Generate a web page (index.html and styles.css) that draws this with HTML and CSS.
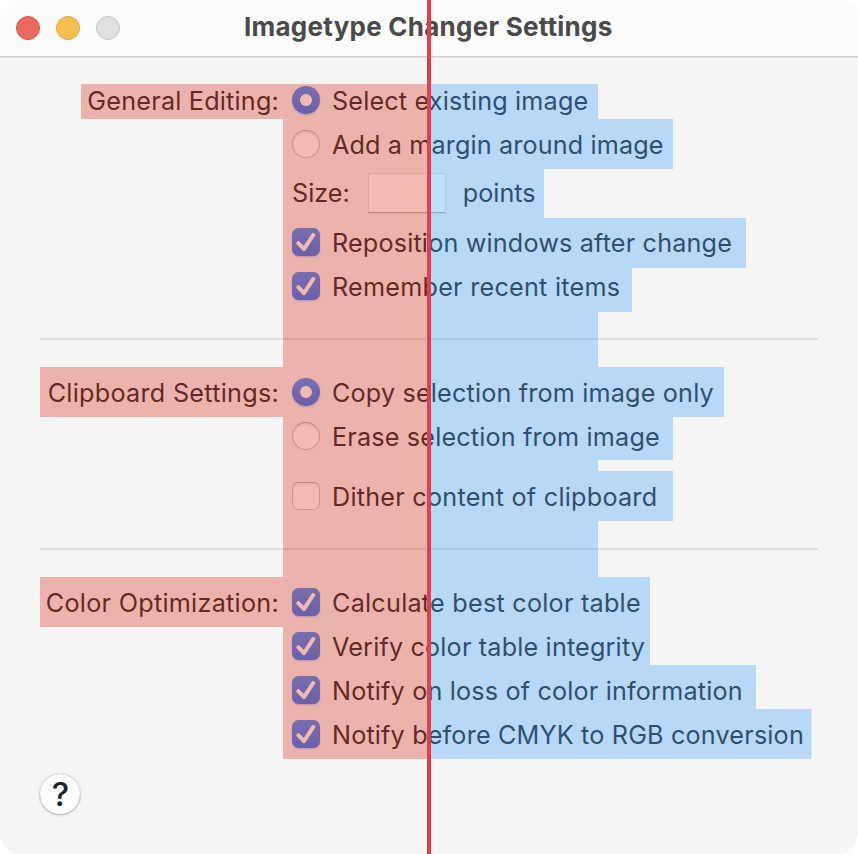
FILE: index.html
```html
<!DOCTYPE html>
<html lang="en">
<head>
<meta charset="utf-8">
<title>Imagetype Changer Settings</title>
<link rel="stylesheet" href="styles.css">
</head>
<body>
<svg class="defs" aria-hidden="true"><symbol id="tick" viewBox="0 0 28 28"><path d="M6.3 15.2 12 21.1 21.2 7"/></symbol></svg>
<div class="window">
  <header class="titlebar">
    <i class="light close"></i><i class="light minimize"></i><i class="light zoom"></i>
    <h1 class="title"><span>Imagetype Changer Settings</span></h1>
  </header>
  <main class="settings">
    <section class="group">
      <div class="row"><span class="label">General Editing:</span><i class="radio on"></i><span>Select existing image</span></div>
      <div class="row tight"><span class="label"></span><i class="radio"></i><span>Add a margin around image</span></div>
      <div class="row size"><span class="label"></span><span>Size:</span><span class="field"></span><span>points</span></div>
      <div class="row"><span class="label"></span><i class="check on"><svg><use href="#tick"/></svg></i><span>Reposition windows after change</span></div>
      <div class="row loose"><span class="label"></span><i class="check on"><svg><use href="#tick"/></svg></i><span>Remember recent items</span></div>
    </section>
    <hr>
    <section class="group">
      <div class="row"><span class="label wide">Clipboard Settings:</span><i class="radio on"></i><span>Copy selection from image only</span></div>
      <div class="row"><span class="label"></span><i class="radio"></i><span>Erase selection from image</span></div>
      <div class="row loose apart"><span class="label"></span><i class="check"></i><span>Dither content of clipboard</span></div>
    </section>
    <hr>
    <section class="group">
      <div class="row loose"><span class="label wide">Color Optimization:</span><i class="check on"><svg><use href="#tick"/></svg></i><span>Calculate best color table</span></div>
      <div class="row"><span class="label"></span><i class="check on"><svg><use href="#tick"/></svg></i><span>Verify color table integrity</span></div>
      <div class="row"><span class="label"></span><i class="check on"><svg><use href="#tick"/></svg></i><span>Notify on loss of color information</span></div>
      <div class="row"><span class="label"></span><i class="check on"><svg><use href="#tick"/></svg></i><span>Notify before CMYK to RGB conversion</span></div>
    </section>
    <div class="help">?</div>
  </main>
  <svg class="overlay" viewBox="0 0 858 854" aria-hidden="true">
    <path class="left-side" d="M81 84H429V759H283V627H40V577H283V417H40V367H283V119H81Z"/>
    <path class="right-side" d="M429 84H598V119H673V169H544V218H746V268H632V312H598V367H724V417H673V460H598V471H673V521H598V577H650V665H756V709H811.5V759H429Z"/>
    <path class="axis" d="M427 0H431V854H427Z"/>
  </svg>
</div>
</body>
</html>
```
FILE: styles.css
```css
* { box-sizing: border-box; }
body { margin: 0; background: #fff; font-family: Inter, "Liberation Sans", sans-serif; }
.defs { display: none; }
.window { position: relative; width: 858px; height: 854px; overflow: hidden; border-radius: 20px; background: #f5f5f5; }
.titlebar { display: flex; align-items: center; gap: 16px; height: 58px; padding: 0 16px 2px; background: #fcfcfc; border-bottom: 1px solid #e4e4e4; box-shadow: inset 0 -1px #cdcdcd; }
.light { width: 24px; height: 24px; border-radius: 50%; border: 1px solid; }
.close { background: #ed6a5f; border-color: #d5554b; }
.minimize { background: #f5bf4f; border-color: #dba43b; }
.zoom { background: #e1e1e1; border-color: #c4c4c4; }
.title { flex: 1; margin: 0 0 2px 108px; color: #4a4a4a; font-size: 26px; line-height: 32px; font-weight: 700; letter-spacing: .25px; white-space: nowrap; }
.settings { padding: 21px 40px 0; }
.row { display: flex; align-items: center; height: 44px; white-space: nowrap; color: #252525; font-size: 25.2px; line-height: 30px; letter-spacing: .17px; }
.tight { letter-spacing: .13px; }
.loose { letter-spacing: .24px; }
.label { width: 239px; margin-right: 13px; text-align: right; flex: none; letter-spacing: .2px; }
.wide { letter-spacing: .27px; }
.size { height: 54px; padding-bottom: 2px; letter-spacing: 0; }
.apart { margin-top: 16px; }
.field { width: 78px; height: 40px; margin: 0 17px 0 18px; background: #fff; border: 1px solid #dedede; border-bottom-color: #b0b0b0; box-shadow: 0 1px #e2e2e2; }
.radio, .check { flex: none; width: 28px; height: 28px; margin: 0 12px 2px 0; background: #fff; border: 1px solid #c5c5c5; border-top-color: #b2b2b2; box-shadow: inset 0 2px 2px #0001; }
.radio { border-radius: 50%; }
.check { border-radius: 6.5px; }
.on { border: 0; background: linear-gradient(#478ef6, #2f76f2); box-shadow: 0 1px 2px #2f76f266; }
.radio.on { display: grid; place-items: center; }
.radio.on::after { content: ""; width: 12px; height: 12px; border-radius: 50%; background: #fff; }
.check svg { display: block; width: 28px; height: 28px; fill: none; stroke: #fff; stroke-width: 4; stroke-linecap: round; stroke-linejoin: round; }
hr { height: 2px; margin: 29px 0 31px; border: 0; background: #dedede; }
.help { display: grid; place-items: center; width: 40px; height: 40px; margin-top: 17px; padding-left: 1px; border-radius: 50%; background: #fff; box-shadow: 0 0 1px #0005, 0 1px 3px #0004; color: #222; font-size: 33px; line-height: 40px; font-weight: 500; }
.overlay { position: absolute; inset: 0; width: 858px; height: 854px; }
.left-side { fill: rgb(221 54 36 / .34); }
.right-side { fill: rgb(66 160 251 / .34); }
.axis { fill: #e63e45; }
```
